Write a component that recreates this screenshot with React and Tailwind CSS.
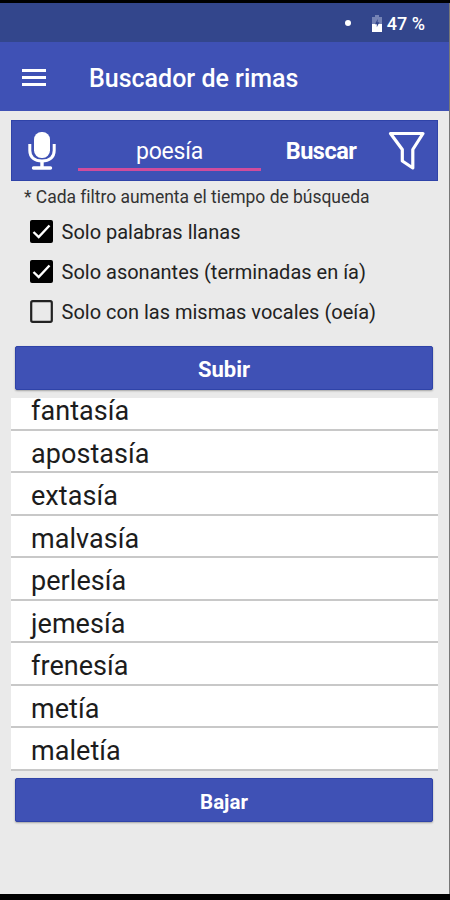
import React from 'react';

const rhymes = [
  'apostasía',
  'extasía',
  'malvasía',
  'perlesía',
  'jemesía',
  'frenesía',
  'metía',
  'maletía',
];

const filters = [
  { label: 'Solo palabras llanas', checked: true },
  { label: 'Solo asonantes (terminadas en ía)', checked: true },
  { label: 'Solo con las mismas vocales (oeía)', checked: false },
];

const BatteryIcon = () => (
  <svg className="w-[10px] h-[17px]" viewBox="0 0 10 17">
    <path d="M3 0h4v2h3v15H0V2h3z" fill="#7583b5" />
    <path d="M0 9h3.500l2-3v3H10v8H0z" fill="#fff" />
    <path d="M5.6 4L3 9.300h1.800v3l2.600-5H5.800z" fill="#33468c" />
  </svg>
);

const MicIcon = () => (
  <svg className="w-[28px] h-[40px]" viewBox="0 0 28 40" fill="none" stroke="#fff">
    <rect x="6" y="1" width="16" height="26" rx="7.5" fill="#fff" stroke="none" />
    <path d="M1.8 13v6.5c0 7 5 10.500 12.200 10.500s12.200-3.500 12.200-10.500V13" strokeWidth="3" />
    <path d="M14 30v7" strokeWidth="3.400" />
    <path d="M5.500 37h17" strokeWidth="3.400" strokeLinecap="round" />
  </svg>
);

const FilterIcon = () => (
  <svg className="w-[38px] h-[40px]" viewBox="0 0 38 40" fill="none" stroke="#fff" strokeWidth="3.200">
    <path d="M2.500 2.500h32.500L24.800 18.500V37l-10.500-7V18.500z" strokeLinejoin="round" />
  </svg>
);

const Checkbox = ({ label, checked }) => (
  <label className="flex items-center h-[40.2px]">
    <svg className="w-[23px] h-[23px] flex-shrink-0" viewBox="0 0 23 23" fill="none">
      {checked ? (
        <>
          <rect width="23" height="23" rx="2" fill="#000" />
          <path d="M3.500 12l5.200 5L19.500 5.500" stroke="#fff" strokeWidth="2.400" />
        </>
      ) : (
        <rect x="1.200" y="1.200" width="20.600" height="20.600" rx="1.500" stroke="#222" strokeWidth="2.200" />
      )}
    </svg>
    <span className="ml-[8.500px] pt-[1px] text-[20px] text-[#222] whitespace-nowrap">{label}</span>
  </label>
);

const MoveButton = ({ className, children }) => (
  <button
    className={`block w-[418px] h-[44px] ml-[4px] pt-[4px] rounded-[2px] bg-[#3f51b5] border border-[#2f43a8] text-white leading-[38px] font-bold shadow-[0_1px_2px_rgba(0,0,0,0.3)] ${className}`}
  >
    {children}
  </button>
);

const App = () => {
  return (
    <div className="w-[450px] h-[900px] flex flex-col overflow-hidden bg-black pt-[3px] pb-[6.500px] font-['Roboto',sans-serif]">
      <div className="flex-1 min-h-0 flex flex-col bg-[#eaeaea] border-r border-[#777]">
        {/* Status bar */}
        <div className="h-[39px] flex-shrink-0 flex items-center justify-end bg-[#33468c] pr-[24px] pt-[2px] text-white">
          <span className="w-[6px] h-[6px] rounded-full bg-white mr-[21px] mb-[2px]" />
          <BatteryIcon />
          <span className="ml-[5px] text-[18px] font-medium leading-none">47 %</span>
        </div>

        {/* App bar */}
        <header className="h-[69px] flex-shrink-0 flex items-center bg-[#3f51b5] pl-[22px] pt-[2px] text-white">
          <div className="w-[24px] flex flex-col gap-[4px]">
            <span className="h-[3px] bg-white" />
            <span className="h-[3px] bg-white" />
            <span className="h-[3px] bg-white" />
          </div>
          <h1 className="ml-[43px] pt-[2px] text-[25px] font-medium whitespace-nowrap">Buscador de rimas</h1>
        </header>

        <main className="mt-[9px] pl-[11px] pr-[11px]">
          {/* Search */}
          <div className="h-[61px] flex items-center bg-[#3f51b5] border border-[#2f43a8] text-white">
            <div className="ml-[16px]"><MicIcon /></div>
            <div className="ml-[22px] w-[183px] h-[42px] border-b-[3px] border-[#d14c9c] flex items-center justify-center text-[23px] tracking-[-0.200px] pt-[7px] self-end mb-[9px]">
              poesía
            </div>
            <button className="ml-[24px] w-[72px] text-[23.500px] tracking-[-0.500px] font-bold pt-[3px]">Buscar</button>
            <div className="ml-[31px]"><FilterIcon /></div>
          </div>
          <p className="pl-[13px] h-[29px] pt-[5px] text-[17.500px] leading-[22px] tracking-[-0.030px] text-[#333] whitespace-nowrap">
            * Cada filtro aumenta el tiempo de búsqueda
          </p>
          <div className="pl-[19px] pt-[1px]">
            {filters.map((filter) => (
              <Checkbox key={filter.label} {...filter} />
            ))}
          </div>

          {/* Results */}
          <div className="mt-[14px]">
            <MoveButton className="text-[22px]">Subir</MoveButton>
          </div>
          <ul className="mt-[8px] bg-white text-[27px] tracking-[0.050px] text-[#1c1c1c]">
            <li className="h-[33px] pl-[20px] leading-[26px] border-b-2 border-[#c8c8c8]">fantasía</li>
            {rhymes.map((word) => (
              <li key={word} className="h-[42.550px] pl-[20px] leading-[46px] border-b-2 border-[#c8c8c8]">
                {word}
              </li>
            ))}
          </ul>
          <div className="mt-[7px]">
            <MoveButton className="text-[20.500px]">Bajar</MoveButton>
          </div>
        </main>
      </div>
    </div>
  );
};

export default App;
